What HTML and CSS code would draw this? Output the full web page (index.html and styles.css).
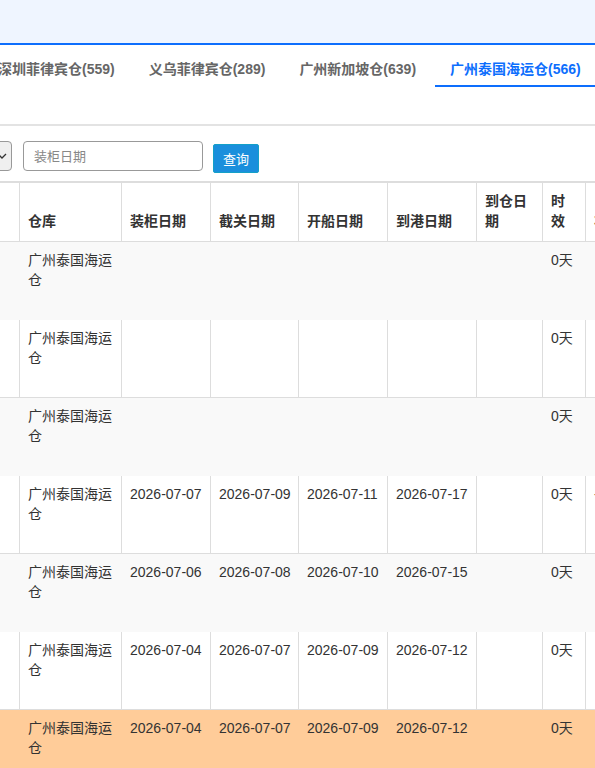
FILE: index.html
```html
<!DOCTYPE html>
<html lang="zh-CN">
<head>
  <meta charset="UTF-8">
  <title>装柜计划</title>
  <link rel="stylesheet" href="styles.css">
</head>
<body>
  <header class="topbar"></header>

  <div class="tabs">
    <a class="tab first" href="#">深圳菲律宾仓(559)</a>
    <a class="tab" href="#">义乌菲律宾仓(289)</a>
    <a class="tab" href="#">广州新加坡仓(639)</a>
    <a class="tab active" href="#">广州泰国海运仓(566)</a>
  </div>

  <div class="filters">
    <div class="select">
      <svg width="10" height="6" viewBox="0 0 10 6"><path d="M1 1l4 4 4-4" fill="none" stroke="#333" stroke-width="1.3"/></svg>
    </div>
    <input type="text" class="date-input" placeholder="装柜日期">
    <button class="btn-search">查询</button>
  </div>

  <table class="grid">
    <colgroup>
      <col class="c-no">
      <col class="c-wh">
      <col class="c-date">
      <col class="c-date2">
      <col class="c-date">
      <col class="c-date">
      <col class="c-arrive">
      <col class="c-days">
      <col class="c-more">
    </colgroup>
    <thead>
      <tr>
        <th>序号</th>
        <th>仓库</th>
        <th>装柜日期</th>
        <th>截关日期</th>
        <th>开船日期</th>
        <th>到港日期</th>
        <th>到仓日期</th>
        <th>时效</th>
        <th>状态</th>
      </tr>
    </thead>
    <tbody id="rows"></tbody>
  </table>

  <script>
    const rows = [
      ["", "", "", "", ""],
      ["", "", "", "", ""],
      ["", "", "", "", ""],
      ["2026-07-07", "2026-07-09", "2026-07-11", "2026-07-17", "", "-"],
      ["2026-07-06", "2026-07-08", "2026-07-10", "2026-07-15", ""],
      ["2026-07-04", "2026-07-07", "2026-07-09", "2026-07-12", ""],
      ["2026-07-04", "2026-07-07", "2026-07-09", "2026-07-12", ""]
    ];

    const body = document.getElementById("rows");
    rows.forEach((r, i) => {
      const tr = document.createElement("tr");
      if (i === rows.length - 1) tr.className = "hot";
      tr.innerHTML = `
        <td>${i + 1}</td>
        <td>广州泰国海运仓</td>
        <td>${r[0]}</td>
        <td>${r[1]}</td>
        <td>${r[2]}</td>
        <td>${r[3]}</td>
        <td>${r[4]}</td>
        <td>0天</td>
        <td>${r[5] || ""}</td>
      `;
      body.appendChild(tr);
    });
  </script>
</body>
</html>
```

FILE: styles.css
```css
* {
  box-sizing: border-box;
}

html, body {
  overflow: hidden;
}

body {
  margin: 0;
  font-family: "Liberation Sans", "Noto Sans CJK SC", sans-serif;
  font-size: 14px;
  color: #333;
  background: #fff;
}

.topbar {
  height: 45px;
  background: #eff5ff;
  border-bottom: 2px solid #0d6efd;
}

.tabs {
  display: flex;
  gap: 4px;
  height: 81px;
  border-bottom: 2px solid #e3e3e3;
  white-space: nowrap;
}

.tab {
  padding: 14px 15px 6px;
  height: 42px;
  line-height: 20px;
  font-weight: bold;
  color: #666;
  text-decoration: none;
  border-bottom: 2px solid transparent;
}

.tab.first {
  margin-left: -17px;
}

.tab.active {
  color: #0d6efd;
  border-bottom-color: #0d6efd;
  padding-right: 40px;
}

.filters {
  display: flex;
  align-items: flex-start;
  padding: 15px 0 8px;
}

.select {
  width: 80px;
  height: 30px;
  margin-left: -68px;
  margin-right: 11px;
  background: #efefef;
  border: 1px solid #999;
  border-radius: 4px;
  display: flex;
  align-items: center;
  justify-content: flex-end;
  padding-right: 4px;
}

.date-input {
  width: 180px;
  height: 30px;
  margin-right: 10px;
  padding: 0 10px;
  border: 1px solid #999;
  border-radius: 4px;
  font: inherit;
  font-size: 13px;
}

.date-input::placeholder {
  color: #888;
}

.btn-search {
  margin-top: 3px;
  width: 46px;
  height: 29px;
  padding: 0;
  background: #1a8fdc;
  border: 1px solid #14a0c8;
  border-radius: 2px;
  color: #fff;
  font: inherit;
  font-size: 13px;
}

.grid {
  margin-left: -40px;
  table-layout: fixed;
  border-collapse: separate;
  border-spacing: 0;
  width: 706px;
  border-top: 2px solid #ddd;
}

.c-no { width: 60px; }
.c-wh { width: 102px; }
.c-date { width: 89px; }
.c-date2 { width: 88px; }
.c-arrive { width: 66px; }
.c-days { width: 43px; }
.c-more { width: 80px; }

th, td {
  padding: 8px 6px 8px 8px;
  line-height: 20px;
  text-align: left;
  vertical-align: top;
  overflow: hidden;
}

th {
  height: 57px;
  padding-bottom: 10px;
  padding-right: 8px;
  vertical-align: bottom;
  font-weight: bold;
  border-right: 1px solid #ddd;
  border-bottom: 1px solid #ddd;
}

td {
  height: 78px;
  border-right: 1px solid transparent;
}

tbody tr:nth-child(odd) td {
  background: #f9f9f9;
}

tbody tr:nth-child(even) td {
  border-right-color: #ddd;
  border-bottom: 1px solid #ddd;
}

tbody tr.hot td {
  background: #ffcc99;
  border-right-color: transparent;
}
```
